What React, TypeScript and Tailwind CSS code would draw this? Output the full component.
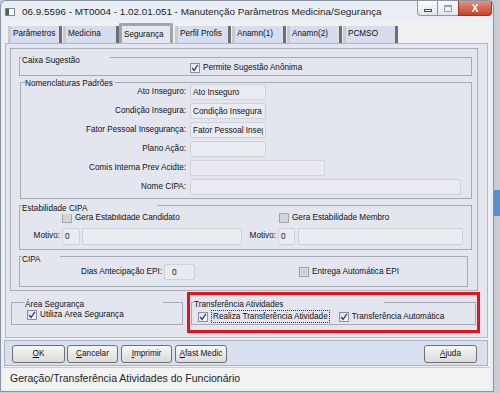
import React from 'react';

const Check = ({ checked, label, focus }: { checked?: boolean; label: string; focus?: boolean }) => (
  <div className="flex items-center gap-[3px]">
    <span
      className={`flex h-[10px] w-[10px] shrink-0 items-center justify-center border ${
        checked ? 'border-[#8a8f99] bg-gradient-to-br from-[#dde1e8] to-[#fbfbfc]' : 'border-[#a2a5aa] bg-[#d3d5d9]'
      }`}
    >
      {checked && (
        <svg viewBox="0 0 8 8" className="h-[8px] w-[8px]">
          <path d="M1.2 4 L3.1 6.4 L6.9 0.9" fill="none" stroke="#253f8c" strokeWidth="1.3" />
        </svg>
      )}
    </span>
    <span className={focus ? 'border border-dotted border-[#333] px-[1px] leading-[11px]' : 'leading-[10px]'}>{label}</span>
  </div>
);

const Group = ({ label, cls, lcls, children }: { label: string; cls: string; lcls: string; children?: React.ReactNode }) => (
  <div className={`relative shrink-0 border border-[#a3aab6] ${cls}`}>
    <span className={`absolute bg-[#e3e6ee] leading-[10px] whitespace-nowrap ${lcls}`}>{label}</span>
    {children}
  </div>
);

const Field = ({ value, cls }: { value?: string; cls: string }) => (
  <input
    readOnly
    value={value ?? ''}
    className={`h-[16px] shrink-0 rounded-[2px] border border-[#cdd1d9] bg-[#e9ebf0] px-[2px] text-[#111] outline-none ${cls}`}
  />
);

const Btn = ({ k, rest, cls }: { k: string; rest: string; cls: string }) => (
  <button className={`h-[18px] shrink-0 rounded-[3px] border border-[#707070] bg-gradient-to-b from-[#f7f7f7] to-[#dadada] text-center leading-[16px] text-[#111] ${cls}`}>
    <span className="underline">{k}</span>
    {rest}
  </button>
);

const Tab = ({ label, cls }: { label: string; cls: string }) => (
  <div className={`flex h-[17px] shrink-0 items-center border-l-[3px] border-r-[3px] border-l-[#c7cad0] border-r-[#6f6f6f] bg-[#d5ddee] pl-[2px] ${cls}`}>
    {label}
  </div>
);

const rows: [string, string, string][] = [
  ['Ato Inseguro:', 'Ato Inseguro', 'w-[76px]'],
  ['Condição Insegura:', 'Condição Insegura', 'w-[76px]'],
  ['Fator Pessoal Insegurança:', 'Fator Pessoal Insegurança', 'w-[76px]'],
  ['Plano Ação:', '', 'w-[76px]'],
  ['Comis Interna Prev Acidte:', '', 'w-[135px]'],
  ['Nome CIPA:', '', 'w-[271px]'],
];

export default function App() {
  return (
    <div className="flex h-[393px] w-[500px] overflow-hidden bg-[#c9cdd3] font-['Liberation_Sans',Arial,sans-serif] text-[8.2px] text-[#111]">
      {/* window */}
      <div className="flex h-[392px] w-[494px] shrink-0 flex-col rounded-t-[6px] border border-[#8a95a3] bg-[#e9eef5]">
        {/* title bar */}
        <div className="flex h-[20px] shrink-0">
          <div className="ml-[4px] mt-[7px] flex h-[8px] w-[10px] border border-[#7d8790] bg-white">
            <div className="h-full w-[3px] bg-[#3f6b4a]" />
          </div>
          <div className="ml-[7px] mt-[4px] text-[9.9px] leading-[13px] text-[#1e1e1e]">
            06.9.5596 - MT0004 - 1.02.01.051 - Manutenção Parâmetros Medicina/Segurança
          </div>
          <div className="ml-auto mr-[1px] flex h-[15px]">
            <div className="flex w-[21px] items-end justify-center rounded-bl-[4px] border border-t-0 border-[#8d97a5] bg-gradient-to-b from-[#fbfcfd] to-[#dfe5ec] pb-[3px]">
              <div className="h-[3px] w-[8px] border border-[#4a4f57] bg-white" />
            </div>
            <div className="flex w-[20px] items-center justify-center border-b border-[#8d97a5] bg-gradient-to-b from-[#fbfcfd] to-[#dfe5ec]">
              <div className="h-[7px] w-[8px] border border-[#9aa1aa] border-t-2" />
            </div>
            <div className="flex w-[34px] items-center justify-center rounded-br-[4px] border border-t-0 border-[#8b3a2c] bg-gradient-to-b from-[#e5917f] to-[#c43f27] text-[10px] font-bold text-white">
              X
            </div>
          </div>
        </div>

        {/* client */}
        <div className="ml-[2px] flex h-[368px] w-[487px] flex-col bg-[#f0f0f0]">
          {/* tabs */}
          <div className="flex h-[22px] shrink-0 items-end pl-[5px]">
            <Tab label="Parâmetros" cls="w-[54px]" />
            <Tab label="Medicina" cls="ml-[1px] w-[56px]" />
            <div className="flex h-[20px] w-[54px] shrink-0 items-center rounded-t-[2px] border-[3px] border-b-0 border-[#a4a6aa] bg-[#e4e7ef] pl-[2px] pt-[2px]">
              Segurança
            </div>
            <Tab label="Perfil Profis" cls="ml-[2px] w-[56px]" />
            <Tab label="Anamn(1)" cls="ml-[1px] w-[54px]" />
            <Tab label="Anamn(2)" cls="ml-[1px] w-[55px]" />
            <Tab label="PCMSO" cls="ml-[1px] w-[55px]" />
          </div>

          {/* tab page */}
          <div className="ml-[2px] flex h-[295px] w-[483px] shrink-0 flex-col border border-[#b3bac6] bg-[#e3e6ee]">
            <div className="ml-[4px] mt-[4px] flex h-[243px] w-[468px] shrink-0 flex-col gap-[6px] border border-[#a9b0bb] pl-[8px] pt-[8px]">
              <Group label="Caixa Sugestão" cls="h-[19px] w-[453px]" lcls="left-[2px] top-[-2px] w-[88px]">
                <div className="pl-[170px] pt-[5px]">
                  <Check checked label="Permite Sugestão Anônima" />
                </div>
              </Group>

              <Group label="Nomenclaturas Padrões" cls="ml-[1px] h-[117px] w-[452px]" lcls="left-[4px] top-[-4px] w-[90px]">
                <div className="flex flex-col gap-[3px] pt-[1px]">
                  {rows.map(([l, v, w]) => (
                    <div key={l} className="flex h-[16px] items-center">
                      <span className="mr-[4px] w-[165px] shrink-0 text-right">{l}</span>
                      <Field value={v} cls={w} />
                    </div>
                  ))}
                </div>
              </Group>

              <Group label="Estabilidade CIPA" cls="h-[45px] w-[453px]" lcls="left-[2px] top-[-2px] w-[135px]">
                <div className="flex pt-[7px]">
                  <div className="flex w-[222px] shrink-0 flex-col gap-[5px]">
                    <div className="pl-[42px]">
                      <Check label="Gera Estabilidade Candidato" />
                    </div>
                    <div className="flex h-[17px] items-center">
                      <span className="w-[40px] shrink-0 text-right">Motivo:</span>
                      <Field value="0" cls="ml-[2px] h-[17px] w-[18px]" />
                      <Field cls="ml-[2px] h-[17px] w-[160px]" />
                    </div>
                  </div>
                  <div className="flex flex-col gap-[5px]">
                    <div className="pl-[37px]">
                      <Check label="Gera Estabilidade Membro" />
                    </div>
                    <div className="flex h-[17px] items-center">
                      <span className="w-[34px] shrink-0 text-right">Motivo:</span>
                      <Field value="0" cls="ml-[2px] h-[17px] w-[17px]" />
                      <Field cls="ml-[3px] h-[17px] w-[165px]" />
                    </div>
                  </div>
                </div>
              </Group>

              <Group label="CIPA" cls="h-[31px] w-[449px]" lcls="left-[2px] top-[-2px] w-[38px]">
                <div className="mt-[7px] flex h-[16px] items-center">
                  <span className="w-[142px] shrink-0 text-right">Dias Antecipação EPI:</span>
                  <Field value="0" cls="ml-[2px] w-[31px] pl-[7px]" />
                  <div className="ml-[104px]">
                    <Check label="Entrega Automática EPI" />
                  </div>
                </div>
              </Group>
            </div>

            <div className="flex">
              <Group label="Área Segurança" cls="ml-[5px] mt-[11px] h-[23px] w-[172px]" lcls="left-[13px] top-[-3px] w-[138px]">
                <div className="pl-[15px] pt-[7px]">
                  <Check checked label="Utiliza Área Segurança" />
                </div>
              </Group>
              <div className="ml-[4px] mt-[1px] h-[41px] w-[293px] shrink-0 border-[3px] border-[#e5111b]">
                <Group label="Transferência Atividades" cls="ml-[1px] mt-[7px] h-[23px] w-[285px]" lcls="left-[2px] top-[-3px] w-[190px]">
                  <div className="flex items-center pl-[6px] pt-[7px]">
                    <Check checked focus label="Realiza Transferência Atividade" />
                    <div className="ml-[9px]">
                      <Check checked label="Transferência Automática" />
                    </div>
                  </div>
                </Group>
              </div>
            </div>
          </div>

          {/* button bar */}
          <div className="ml-[1px] mt-[2px] flex h-[26px] w-[484px] shrink-0 border border-[#a6b1c4] bg-[#d8e0ef] pl-[7px] pt-[4px]">
            <Btn k="O" rest="K" cls="w-[53px]" />
            <Btn k="C" rest="ancelar" cls="ml-[2px] w-[51px]" />
            <Btn k="I" rest="mprimir" cls="ml-[3px] w-[51px]" />
            <Btn k="A" rest="fast Medic" cls="ml-[3px] w-[52px]" />
            <Btn k="A" rest="juda" cls="ml-auto mr-[10px] w-[53px]" />
          </div>

          {/* status bar */}
          <div className="mt-[1px] flex h-[22px] shrink-0 items-center border-t border-[#c9cdd3] bg-[#f3f3f3] pl-[7px] text-[10.5px] text-[#222]">
            Geração/Transferência Atividades do Funcionário
          </div>
        </div>
      </div>

      {/* desktop strip */}
      <div className="flex flex-1 flex-col">
        <div className="h-[190px] bg-[#c9cdd3]" />
        <div className="h-[26px] bg-[#5b8fcc]" />
        <div className="flex-1 bg-[#c9cdd3]" />
      </div>
    </div>
  );
}
